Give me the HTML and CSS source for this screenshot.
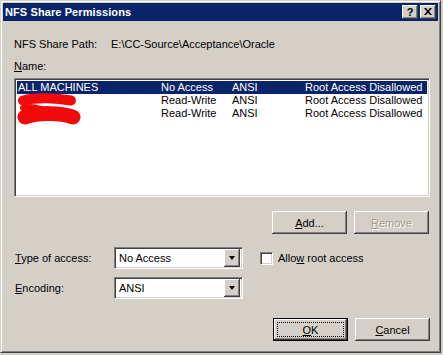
FILE: index.html
```html
<!DOCTYPE html>
<html lang="en">
<head>
  <meta charset="UTF-8">
  <title>NFS Share Permissions</title>
  <link rel="stylesheet" href="styles.css">
</head>
<body>
  <!-- Dialog window -->
  <div class="window">
    <div class="titlebar">
      <span class="title">NFS Share Permissions</span>
      <div class="title-buttons">
        <span class="title-btn help">?</span>
        <span class="title-btn close">
          <svg width="8" height="7" viewBox="0 0 8 7">
            <path d="M0 0h2l2 2.2L6 0h2L5 3.5 8 7H6L4 4.8 2 7H0l3-3.5z" fill="#000"/>
          </svg>
        </span>
      </div>
    </div>

    <div class="content">
      <div class="path-row">
        <span class="path-label">NFS Share Path:</span>
        <span>E:\CC-Source\Acceptance\Oracle</span>
      </div>

      <div class="name-label"><u>N</u>ame:</div>

      <div class="listbox">
        <div class="list-row selected">
          <span>ALL MACHINES</span><span>No Access</span><span>ANSI</span><span>Root Access Disallowed</span>
        </div>
        <div class="list-row">
          <span class="hidden-name">host-01</span><span>Read-Write</span><span>ANSI</span><span>Root Access Disallowed</span>
        </div>
        <div class="list-row">
          <span class="hidden-name">host-02</span><span>Read-Write</span><span>ANSI</span><span>Root Access Disallowed</span>
        </div>
        <!-- red marker over the host names -->
        <svg class="redact" width="80" height="52" viewBox="0 0 80 52">
          <path d="M8 21.5 C 22 18, 42 19, 56 21.5" stroke="#f20a0a" stroke-width="10" stroke-linecap="round" fill="none"/>
          <path d="M10 38 C 24 33, 46 34, 58 38" stroke="#f20a0a" stroke-width="15" stroke-linecap="round" fill="none"/>
          <path d="M8 29 C 14 27, 20 28, 26 30" stroke="#f20a0a" stroke-width="6" stroke-linecap="round" fill="none"/>
        </svg>
      </div>

      <div class="list-buttons">
        <button class="btn"><u>A</u>dd...</button>
        <button class="btn" disabled><u>R</u>emove</button>
      </div>

      <div class="form-row">
        <span class="field-label"><u>T</u>ype of access:</span>
        <div class="combo">
          <span class="combo-text">No Access</span>
          <span class="combo-arrow"><span class="tri"></span></span>
        </div>
        <label class="check">
          <span class="checkbox"></span>
          <span>Allo<u>w</u> root access</span>
        </label>
      </div>

      <div class="form-row second">
        <span class="field-label"><u>E</u>ncoding:</span>
        <div class="combo">
          <span class="combo-text">ANSI</span>
          <span class="combo-arrow"><span class="tri"></span></span>
        </div>
      </div>

      <div class="dialog-buttons">
        <button class="btn default"><u>O</u>K</button>
        <button class="btn"><u>C</u>ancel</button>
      </div>
    </div>
  </div>
</body>
</html>
```

FILE: styles.css
```css
/* Global Styles */
* {
  margin: 0;
  padding: 0;
  box-sizing: border-box;
}
body {
  font-family: 'Liberation Sans', Arial, sans-serif;
  font-size: 11px;
  color: #000;
  background-color: #d4d0c8;
  width: 443px;
  height: 355px;
  overflow: hidden;
}
u {
  text-decoration: underline;
  text-underline-offset: 1px;
}

/* Window frame */
.window {
  width: 441px;
  height: 353px;
  background: #d4d0c8;
  border: 1px solid;
  border-color: #d4d0c8 #404040 #404040 #d4d0c8;
  box-shadow: inset 1px 1px #fff, inset -1px -1px #808080;
  padding: 2px;
}
.titlebar {
  height: 18px;
  background: #0a246a;
  color: #fff;
  display: flex;
  align-items: center;
  justify-content: space-between;
  padding: 0 2px 0 2px;
}
.title {
  font-weight: bold;
  font-size: 11px;
  letter-spacing: 0.1px;
}
.title-buttons {
  display: flex;
  gap: 2px;
}
.title-btn {
  width: 16px;
  height: 14px;
  background: #d4d0c8;
  box-shadow: inset -1px -1px #404040, inset 1px 1px #fff, inset -2px -2px #808080;
  color: #000;
  display: flex;
  align-items: center;
  justify-content: center;
  font-weight: bold;
  font-size: 11px;
  line-height: 14px;
}
.title-btn svg {
  display: block;
  margin-top: -1px;
}

/* Content */
.content {
  padding: 0 8px 0 11px;
}
.path-row {
  margin-top: 17px;
  height: 13px;
  line-height: 13px;
  display: flex;
}
.path-label {
  width: 97px;
}
.name-label {
  margin-top: 9px;
  height: 13px;
  line-height: 13px;
}

/* List box */
.listbox {
  position: relative;
  margin-top: 5px;
  height: 119px;
  background: #fff;
  border: 1px solid;
  border-color: #808080 #fff #fff #808080;
  box-shadow: inset 1px 1px #404040, inset -1px -1px #d4d0c8;
  padding: 2px 2px 0 2px;
}
.list-row {
  display: grid;
  grid-template-columns: 143px 71px 73px 1fr;
  height: 13px;
  line-height: 13px;
  padding-left: 1px;
  white-space: nowrap;
}
.list-row.selected {
  background: #0a246a;
  color: #fff;
}
.hidden-name {
  color: #fff;
}
.redact {
  position: absolute;
  left: 0;
  top: 0;
}

/* Buttons */
.btn {
  width: 75px;
  height: 23px;
  font-family: 'Liberation Sans', Arial, sans-serif;
  font-size: 11px;
  color: #000;
  background: #d4d0c8;
  border: none;
  box-shadow: inset -1px -1px #404040, inset 1px 1px #fff, inset -2px -2px #808080;
}
.btn:disabled {
  color: #a09c94;
  text-shadow: 1px 1px #fff;
}
.btn.default {
  position: relative;
  border: 1px solid #000;
}
.btn.default::after {
  content: "";
  position: absolute;
  left: 3px;
  top: 3px;
  right: 3px;
  bottom: 3px;
  border: 1px dotted #000;
}
.list-buttons,
.dialog-buttons {
  display: flex;
  justify-content: flex-end;
  gap: 7px;
}
.list-buttons {
  margin-top: 14px;
  padding-right: 1px;
}
.dialog-buttons {
  margin-top: 19px;
}

/* Form rows */
.form-row {
  margin-top: 13px;
  height: 22px;
  display: flex;
  align-items: center;
}
.form-row.second {
  margin-top: 8px;
}
.field-label {
  width: 100px;
  padding-left: 1px;
}
.combo {
  width: 129px;
  height: 22px;
  background: #fff;
  border: 1px solid;
  border-color: #808080 #fff #fff #808080;
  box-shadow: inset 1px 1px #404040, inset -1px -1px #d4d0c8;
  padding: 2px;
  display: flex;
  align-items: center;
}
.combo-text {
  flex: 1;
  padding-left: 2px;
}
.combo-arrow {
  width: 16px;
  height: 18px;
  background: #d4d0c8;
  box-shadow: inset -1px -1px #404040, inset 1px 1px #fff, inset -2px -2px #808080;
  display: flex;
  align-items: center;
  justify-content: center;
}
.tri {
  width: 0;
  height: 0;
  border-left: 3.5px solid transparent;
  border-right: 3.5px solid transparent;
  border-top: 4px solid #000;
  margin-left: -1px;
}
.check {
  display: flex;
  align-items: center;
  gap: 5px;
  margin-left: 17px;
}
.checkbox {
  width: 13px;
  height: 13px;
  background: #fff;
  border: 1px solid;
  border-color: #808080 #fff #fff #808080;
  box-shadow: inset 1px 1px #404040, inset -1px -1px #d4d0c8;
}
```
